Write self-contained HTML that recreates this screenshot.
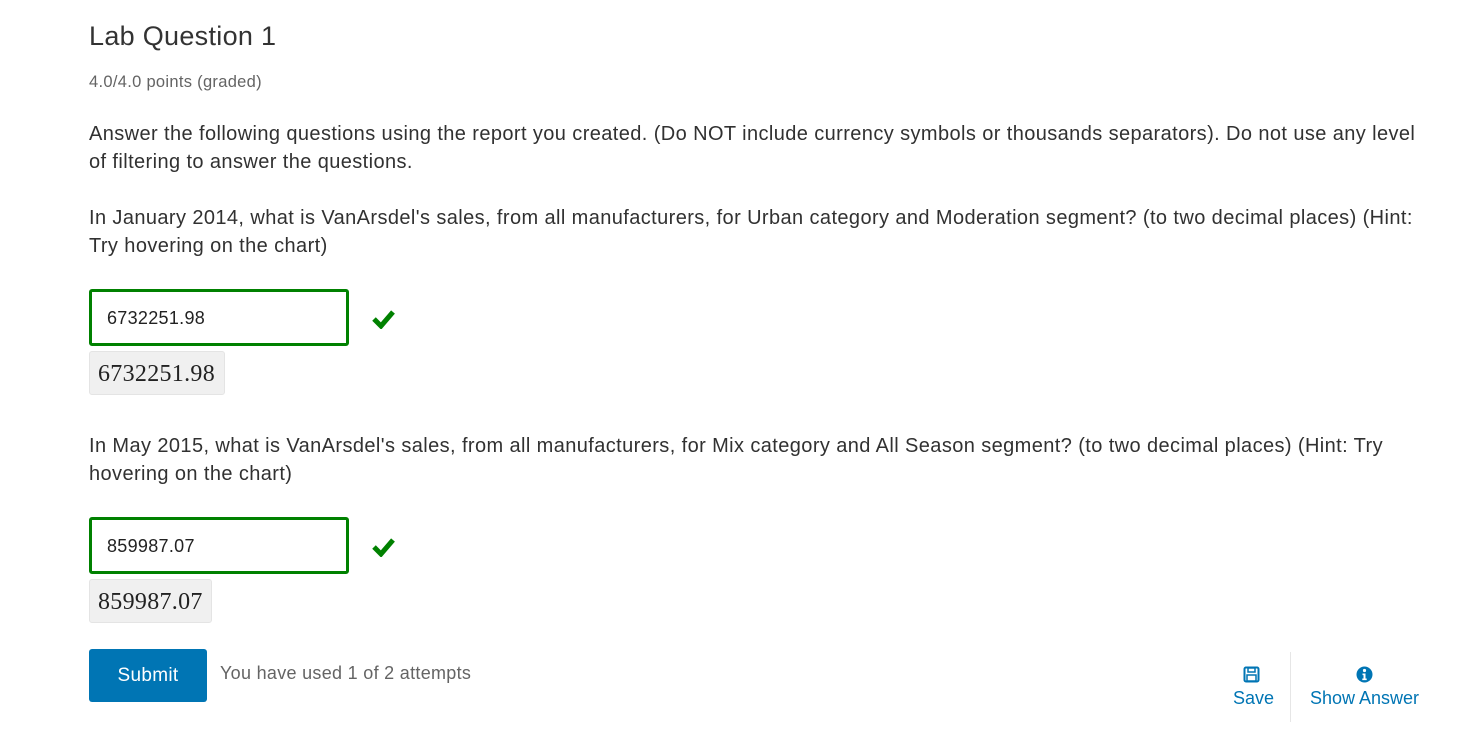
<!DOCTYPE html>
<html><head><style>
body{margin:0;width:1477px;height:740px;background:#fff;font-family:"Liberation Sans",sans-serif;color:#313131;position:relative;overflow:hidden}
.a{position:absolute;white-space:nowrap}
p{position:absolute;left:89px;margin:0;font-size:20px;line-height:28px;width:1370px;letter-spacing:0.4px;white-space:nowrap}
.inp{position:absolute;left:89px;border:3px solid #008100;border-radius:3px;width:254px;height:51px}
.inp span{position:absolute;left:15px;top:16px;font-size:18px;color:#222;letter-spacing:0.3px}
.m{position:absolute;left:89px;height:44px;background:#f0f0f0;border:1px solid #e4e4e4;border-radius:3px;font-family:"Liberation Serif",serif;font-size:24px;color:#222;line-height:44px;padding:0 8px;box-sizing:border-box;letter-spacing:0.3px}
.ck{position:absolute;left:372px}
</style></head><body>
<div class="a" style="left:89px;top:21px;font-size:27px;color:#333;letter-spacing:0.3px">Lab Question 1</div>
<div class="a" style="left:89px;top:73px;font-size:16.5px;color:#646464;letter-spacing:0.3px">4.0/4.0 points (graded)</div>
<p style="top:120px">Answer the following questions using the report you created. (Do NOT include currency symbols or thousands separators). Do not use any level<br>of filtering to answer the questions.</p>
<p style="top:204px">In January 2014, what is VanArsdel's sales, from all manufacturers, for Urban category and Moderation segment? (to two decimal places) (Hint:<br>Try hovering on the chart)</p>
<div class="inp" style="top:289px"><span>6732251.98</span></div>
<svg class="ck" style="top:309px" width="23" height="20" viewBox="0 0 23 20"><path d="M2 10 L9 17 L21 3" stroke="#008100" stroke-width="5" fill="none"/></svg>
<div class="m" style="top:351px;width:136px">6732251.98</div>
<p style="top:432px">In May 2015, what is VanArsdel's sales, from all manufacturers, for Mix category and All Season segment? (to two decimal places) (Hint: Try<br>hovering on the chart)</p>
<div class="inp" style="top:517px"><span>859987.07</span></div>
<svg class="ck" style="top:537px" width="23" height="20" viewBox="0 0 23 20"><path d="M2 10 L9 17 L21 3" stroke="#008100" stroke-width="5" fill="none"/></svg>
<div class="m" style="top:579px;width:123px">859987.07</div>
<div class="a" style="left:89px;top:649px;width:118px;height:53px;background:#0075b4;border-radius:3px;color:#fff;font-size:19px;line-height:53px;text-align:center;letter-spacing:0.3px">Submit</div>
<div class="a" style="left:220px;top:663px;font-size:18px;color:#646464;letter-spacing:0.3px">You have used 1 of 2 attempts</div>
<svg class="a" style="left:1243px;top:666px" width="17" height="17" viewBox="0 0 17 17"><rect x="1.5" y="1.5" width="14" height="14" rx="1.5" fill="none" stroke="#0075b4" stroke-width="2"/><rect x="5" y="2" width="7" height="4" fill="none" stroke="#0075b4" stroke-width="1.5"/><rect x="4" y="9" width="9" height="6" fill="none" stroke="#0075b4" stroke-width="1.5"/></svg>
<div class="a" style="left:1233px;top:688px;font-size:18px;color:#0075b4">Save</div>
<div class="a" style="left:1290px;top:652px;width:1px;height:70px;background:#e6e6e6"></div>
<svg class="a" style="left:1356px;top:666px" width="17" height="17" viewBox="0 0 17 17"><circle cx="8.5" cy="8.5" r="8" fill="#0075b4"/><circle cx="8.5" cy="4.5" r="1.6" fill="#fff"/><path d="M6.5 7.5h3v5h1.2v1.6h-4.4v-1.6h1.2v-3.4h-1z" fill="#fff"/></svg>
<div class="a" style="left:1310px;top:688px;font-size:18px;color:#0075b4">Show Answer</div>
</body></html>
